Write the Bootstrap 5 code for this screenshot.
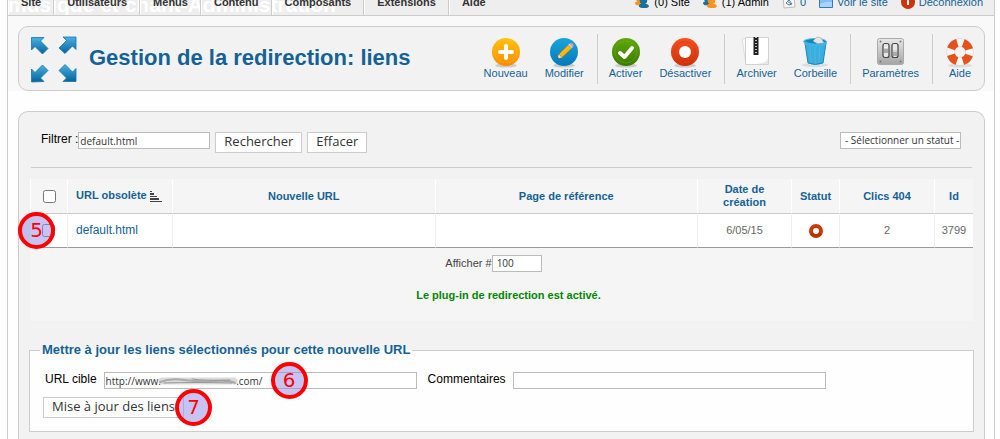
<!DOCTYPE html>
<html lang="fr">
<head>
<meta charset="utf-8">
<meta name="viewport" content="width=device-width, initial-scale=1">
<title>Gestion de la redirection: liens</title>
<link href="https://cdn.jsdelivr.net/npm/bootstrap@5.3.0/dist/css/bootstrap.min.css" rel="stylesheet">
<style>
  body { font-family: "Liberation Sans", Arial, sans-serif; font-size: 11px; line-height: 13px; color: #444; background: #fefefe; }
  a { color: #146295; text-decoration: none; }
  .frame { margin: 0 5px 0 7px; border: solid #ccc; border-width: 0 1px; }

  .topbar { height: 16px; background: #eee; border-bottom: 1px solid #ccc; line-height: 12px; }
  .site-name { left: 0; bottom: 0; font-size: 21px; line-height: 20px; color: #fff; white-space: nowrap; }
  .menu-item { padding: 0 12px 7px; border: solid; border-width: 0 1px; border-color: #ccc #ccc #ccc #fff; color: #333; font-weight: bold; }
  .menu-item:last-child { border-right: 0; }
  .status-list { gap: 13px; padding-right: 11px; }
  .status-item { gap: 4px; padding-bottom: 7px; color: #000; white-space: nowrap; }
  .status-item svg { margin-bottom: -1px; }
  a.status-item { color: #146295; }

  .header-zone { background: #f9f9f9; padding: 10px 9px 0 10px; }
  .panel { background: #f2f2f2; border: 1px solid #ccc; border-radius: 10px; }
  .header-zone .panel { padding: 5px 0 4px; }
  .page-heading { font-size: 22px; line-height: 26px; font-weight: bold; color: #146295; margin: 0; padding: 0 0 2px 8px; }
  .arrows { margin: 0 0 0 8px; }
  .tool { min-width: 32px; padding: 2px 0 5px; margin: 0 8px 0 9px; line-height: 12px; }
  .tool svg { margin-bottom: -1px; }
  .tool-sep { width: 1px; background: #ccc; margin: 0 2px 0 5px; }

  .main-panel { margin: 20px 9px 0 10px; border-bottom: 0; border-radius: 10px 10px 0 0; padding: 20px 11px 6px; }
  .filters { padding: 0 11px 14px 10px; margin: 0 1px; border-bottom: 1px solid #ccc; }
  .filters .push { margin-left: 5px; }
  .lbl { font-size: 12px; line-height: 15px; color: #000; }
  .field { font-family: "Open Sans", "Noto Sans", sans-serif; font-size: 10px; line-height: 13px; height: 17px; padding: 1px; border: 1px solid #bbb; border-radius: 0; background: #fff; color: #333; appearance: none; }
  .push { font-family: "Open Sans", "Noto Sans", sans-serif; font-size: 13px; line-height: 17px; height: 21px; padding: 0 8px 2px; border: 1px solid #ccc; background: #fff; color: #333; }
  .w-filter { width: 132px; }
  .w-status { width: 121px; padding: 1px 0 1px 4px; }
  .w-limit { width: 50px; padding: 1px 4px; }
  .w-url { width: 313px; }

  .links { width: 100%; table-layout: fixed; margin: 11px 0 0; border-collapse: separate; border-spacing: 0; color: #666; text-align: center; background: #f5f5f5; }
  .links th { height: 35px; padding: 0 8px; color: #146295; border-left: 1px solid #fff; border-bottom: 1px solid #ccc; vertical-align: middle; }
  .links tbody td { height: 34px; padding: 0 8px; background: #fff; border-left: 1px solid #efefef; border-bottom: 1px solid #999; vertical-align: middle; }
  .links tbody td:first-child { border-left: 0; }
  .links input[type=checkbox] { width: 13px; height: 13px; margin: 0; vertical-align: middle; }
  .links .c-id { padding: 0; }
  .link-name { font-size: 12px; }
  .sort-mark { vertical-align: -4px; }
  .links tfoot td { height: 73px; padding: 7px 0 0; vertical-align: top; }
  .pager { color: #444; padding-right: 16px; }
  .plugin-ok { color: #080; font-weight: bold; margin: 17px 0 0; padding-left: 14px; }

  .update { margin: 22px -1px 0; border: 1px solid #ccc; background: #fefefe; padding: 15px 13px 13px; }
  .update legend { float: none; width: auto; margin: 0 0 0 -3px; padding: 0 2px; font-size: 13px; line-height: 14px; font-weight: bold; color: #146295; }
  .update-row { gap: 7px; padding-left: 2px; }
  .callout-dot { width: 37px; height: 37px; border: 4px solid #f00; border-radius: 50%; background: rgba(143,136,232,.5); color: #f00; font: 20px/29px "DejaVu Sans", sans-serif; text-align: center; z-index: 2; }
  .dot-row { left: -12px; top: -2px; }
  .dot-url { left: 167px; top: -10px; }
  .dot-push { left: 132px; top: -8px; }
  .smudge { left: 54px; top: 4px; }
</style>
</head>
<body>
<svg class="position-absolute" width="0" height="0" aria-hidden="true">
  <defs>
    <linearGradient id="gBlue" x2="0" y2="1"><stop stop-color="#49b0e6"/><stop offset="1" stop-color="#04649b"/></linearGradient>
    <linearGradient id="gOrange" x2="0" y2="1"><stop stop-color="#ffc20e"/><stop offset="1" stop-color="#ff8a00"/></linearGradient>
    <linearGradient id="gSky" x2="0" y2="1"><stop stop-color="#18a5df"/><stop offset="1" stop-color="#0678b8"/></linearGradient>
    <linearGradient id="gGreen" x2="0" y2="1"><stop stop-color="#5fa80a"/><stop offset="1" stop-color="#3b7a00"/></linearGradient>
    <linearGradient id="gRed" x2="0" y2="1"><stop stop-color="#f8501f"/><stop offset="1" stop-color="#cf2f0a"/></linearGradient>
    <linearGradient id="gSteel" x2="0" y2="1"><stop stop-color="#e9e9e9"/><stop offset="1" stop-color="#a4a4a4"/></linearGradient>
    <symbol id="people" viewBox="0 0 16 16"><circle cx="5" cy="5" r="4" fill="#f7931e"/><path d="M0 9q5-3 10 0v3H3Q0 12 0 9z" fill="#f7931e"/><circle cx="9" cy="7" r="4" fill="#17739c"/><path d="M4 13q0-3 5-3t6 3q-1 2-5 2-5 0-6-2z" fill="#17739c"/></symbol>
    <symbol id="people2" viewBox="0 0 16 16"><circle cx="5" cy="5" r="4" fill="#17739c"/><path d="M0 9q5-3 10 0v3H3Q0 12 0 9z" fill="#17739c"/><circle cx="9" cy="7" r="4" fill="#f7931e"/><path d="M4 13q0-3 5-3t6 3q-1 2-5 2-5 0-6-2z" fill="#f7931e"/></symbol>
  </defs>
</svg>

<div class="frame d-flex flex-column min-vh-100">
  <header class="topbar d-flex align-items-end justify-content-between position-relative overflow-hidden">
    <div class="site-name position-absolute fw-bold">musique et chant-Administration</div>
    <nav class="d-flex position-relative">
      <a class="menu-item" href="#">Site</a><a class="menu-item" href="#">Utilisateurs</a><a class="menu-item" href="#">Menus</a><a class="menu-item" href="#">Contenu</a><a class="menu-item" href="#">Composants</a><a class="menu-item" href="#">Extensions</a><a class="menu-item" href="#">Aide</a>
    </nav>
    <div class="status-list d-flex align-items-end position-relative">
      <span class="status-item d-flex align-items-end"><svg width="15" height="15"><use href="#people"/></svg>(0) Site</span>
      <span class="status-item d-flex align-items-end"><svg width="15" height="15"><use href="#people2"/></svg>(1) Admin</span>
      <a class="status-item d-flex align-items-end" href="#"><svg width="14" height="14"><path d="M1 1h11l1 11-11 1z" fill="#f8f8f8" stroke="#bbb"/><path d="M4 8l3-3 3 4-3 1zM5 6l4 3" fill="none" stroke="#527d9b"/></svg>0</a>
      <a class="status-item d-flex align-items-end" href="#"><svg width="14" height="14"><path d="M.5 1.500h13v11H.5z" fill="#83bdfa" stroke="#3775bd"/><path d="M1 9q6-3 12-2v5H1z" fill="#a9d4ff"/></svg>Voir le site</a>
      <a class="status-item d-flex align-items-end" href="#"><svg width="14" height="14"><circle cx="7" cy="7" r="7" fill="#d0320c"/><path d="M7 4v6" stroke="#fff" stroke-width="2"/></svg>Déconnexion</a>
    </div>
  </header>

  <div class="header-zone">
    <div class="panel d-flex align-items-center">
      <svg class="arrows" width="54" height="54" viewBox="0 0 54 54" fill="url(#gBlue)" stroke="#1673a8" stroke-width=".8">
        <path d="M4.500 5.500H17l-3.500 3.500 7.500 7.500-5.500 5.500L8 14.500 4.500 18z"/>
        <path d="M49 5H36l3.500 3.500L32 16l6 5.500 7.500-7.500L49 17.500z"/>
        <path d="M4.500 50V37L8 40.500l7.500-7.500 5.500 5.500-7.500 7.500L17 49.500z"/>
        <path d="M49 49.500H36l3.500-3.500-7.500-7.500 6-6 7.500 7.500L49 36.500z"/>
      </svg>
      <h1 class="page-heading me-auto">Gestion de la redirection: liens</h1>
      <div class="d-flex text-center">
        <a class="tool d-flex flex-column align-items-center" href="#"><svg width="32" height="32"><ellipse cx="16" cy="29.500" rx="11" ry="2" fill="#ccc"/><circle cx="16" cy="16" r="14" fill="url(#gOrange)"/><circle cx="16" cy="16" r="11" fill="none" stroke="#ffb52e" opacity=".5"/><path d="M16 10v12M10 16h12" stroke="#fff" stroke-width="4" stroke-linecap="round"/></svg>Nouveau</a>
        <a class="tool d-flex flex-column align-items-center" href="#"><svg width="32" height="32"><ellipse cx="16" cy="29.500" rx="11" ry="2" fill="#ccc"/><circle cx="16" cy="16" r="14" fill="url(#gSky)"/><path d="M9 23l2-5 4 3z" fill="#f7dfb6"/><path d="M11 18l9-9 3.500 3.500L14 21.500z" fill="#f9b80d" stroke="#ad7108" stroke-width=".6"/><path d="M20 9l1.500-1.500L25 11l-1.500 1.500z" fill="#ccc"/><path d="M21.500 7.500q2-1 3.500.5t0 3z" fill="#ef9b9b"/><path d="M9 23l.8-2 1.200 1.200z" fill="#222"/></svg>Modifier</a>
        <span class="tool-sep"></span>
        <a class="tool d-flex flex-column align-items-center" href="#"><svg width="32" height="32"><ellipse cx="16" cy="29.500" rx="11" ry="2" fill="#ccc"/><circle cx="16" cy="16" r="14" fill="url(#gGreen)"/><circle cx="16" cy="16" r="11" fill="none" stroke="#74b52b" opacity=".4"/><path d="M10 17l4.500 4L22 12" fill="none" stroke="#fff" stroke-width="4" stroke-linecap="round" stroke-linejoin="round"/></svg>Activer</a>
        <a class="tool d-flex flex-column align-items-center" href="#"><svg width="32" height="32"><ellipse cx="16" cy="29.500" rx="11" ry="2" fill="#ccc"/><circle cx="16" cy="16" r="14" fill="url(#gRed)"/><circle cx="16" cy="16" r="10.500" fill="none" stroke="#d33a12" opacity=".6"/><circle cx="16" cy="16" r="6" fill="#fff"/></svg>Désactiver</a>
        <span class="tool-sep"></span>
        <a class="tool d-flex flex-column align-items-center" href="#"><svg width="32" height="32"><path d="M1 3l6-1v26H5z" fill="#fafafa" stroke="#ddd"/><path d="M4.500 1.500h23v27h-23z" fill="#fff" stroke="#d2d2d2"/><path d="M16 28q10-1 11-6v6z" fill="#e8e8e8"/><path d="M15 1v18" stroke="#222" stroke-width="5"/><path d="M15 1v18" stroke="#bbb" stroke-width="2" stroke-dasharray="1 2"/></svg>Archiver</a>
        <a class="tool d-flex flex-column align-items-center" href="#"><svg width="32" height="32"><ellipse cx="16" cy="29" rx="13" ry="2" fill="#ddd"/><path d="M6 7l3 20q7 3 15 0l3-20z" fill="#3badde" stroke="#1888bd"/><path d="M11 10l1 16M16 10v17M21 10l-1 16" stroke="#5bc3ec" opacity=".5"/><ellipse cx="16" cy="5.500" rx="11.500" ry="3" fill="#1785b8" stroke="#51bfe9"/><path d="M14 5l4-4 4 1 3 5-6 1z" fill="#e4e4e4" stroke="#aaa" stroke-width=".7"/><path d="M5 5q10 5 23 1l-1 3q-10 3-21 0z" fill="#3fb4e4"/></svg>Corbeille</a>
        <span class="tool-sep"></span>
        <a class="tool d-flex flex-column align-items-center" href="#"><svg width="32" height="32"><rect x="2.500" y="2.500" width="26" height="26" rx="2" fill="url(#gSteel)" stroke="#aaa"/><g fill="#777"><circle cx="5.500" cy="5.500" r="1"/><circle cx="25.500" cy="5.500" r="1"/><circle cx="5.500" cy="25.500" r="1"/><circle cx="25.500" cy="25.500" r="1"/></g><g fill="#e8e8e8" stroke="#444" stroke-width="1.200"><rect x="8" y="7.500" width="6" height="14" rx="2"/><rect x="17" y="7.500" width="6" height="14" rx="2"/></g><path d="M9 12h4v5H9zM18 14h4v6h-4z" fill="#aaa"/><path d="M9 12h4M18 15h4" stroke="#fff"/></svg>Paramètres</a>
        <span class="tool-sep"></span>
        <a class="tool d-flex flex-column align-items-center" href="#"><svg width="32" height="32"><ellipse cx="16" cy="29.500" rx="12" ry="2" fill="#ddd"/><circle cx="16" cy="16" r="9.500" fill="none" stroke="#ccc" stroke-width="8"/><circle cx="16" cy="16" r="9.500" fill="none" stroke="#f8f8f8" stroke-width="7"/><circle cx="16" cy="16" r="9.500" fill="none" stroke="#e5521b" stroke-width="8" stroke-dasharray="8.900 6.022" stroke-dashoffset="-3"/></svg>Aide</a>
      </div>
    </div>
  </div>

  <main class="panel main-panel flex-grow-1">
    <form>
      <div class="filters d-flex align-items-start">
        <label class="lbl" for="filter">Filtrer :</label>
        <input class="field w-filter" id="filter" type="text" value="default.html">
        <button class="push" type="button">Rechercher</button>
        <button class="push" type="button">Effacer</button>
        <select class="field w-status ms-auto me-0" aria-label="Statut"><option>- Sélectionner un statut -</option></select>
      </div>

      <table class="links">
        <colgroup><col style="width:37px"><col style="width:105px"><col><col><col style="width:94px"><col style="width:48px"><col style="width:95px"><col style="width:39px"></colgroup>
        <thead>
          <tr>
            <th class="p-0"><input type="checkbox" aria-label="Tout cocher"></th>
            <th class="text-start text-nowrap">URL obsolète <svg class="sort-mark" width="12" height="12" fill="#444"><path d="M0 0h2v1H0zM0 2h4v2H0zM0 5h7v1H0zM0 7h9v2H0zM0 10h12v1H0z"/></svg></th>
            <th>Nouvelle URL</th><th>Page de référence</th><th>Date de création</th><th class="px-0">Statut</th><th>Clics 404</th><th class="c-id">Id</th>
          </tr>
        </thead>
        <tbody>
          <tr>
            <td class="p-0"><div class="position-relative d-flex align-items-center justify-content-center h-100"><input type="checkbox" aria-label="Cocher default.html"><span class="callout-dot dot-row position-absolute">5</span></div></td>
            <td class="text-start"><a class="link-name" href="#">default.html</a></td>
            <td></td><td></td><td>6/05/15</td>
            <td><svg width="14" height="14"><circle cx="7" cy="7" r="5" fill="#fff" stroke="#c83a08" stroke-width="4"/><path d="M2.500 9a5 5 0 0 0 9 0" fill="none" stroke="#9c2b02" stroke-width="3" opacity=".5"/></svg></td>
            <td>2</td><td class="c-id">3799</td>
          </tr>
        </tbody>
        <tfoot>
          <tr><td colspan="8">
            <div class="pager d-flex align-items-center justify-content-center"><label for="limit">Afficher #</label><select class="field w-limit" id="limit"><option>100</option></select></div>
            <p class="plugin-ok">Le plug-in de redirection est activé.</p>
          </td></tr>
        </tfoot>
      </table>

      <fieldset class="update">
        <legend>Mettre à jour les liens sélectionnés pour cette nouvelle URL</legend>
        <div class="update-row d-flex align-items-start mb-2">
          <label class="lbl" for="target">URL cible</label>
          <div class="position-relative">
            <input class="field w-url d-block" id="target" type="text" value="http://www.&nbsp;&nbsp;&nbsp;&nbsp;&nbsp;&nbsp;&nbsp;&nbsp;&nbsp;&nbsp;&nbsp;&nbsp;&nbsp;&nbsp;&nbsp;&nbsp;&nbsp;&nbsp;&nbsp;&nbsp;&nbsp;&nbsp;&nbsp;&nbsp;&nbsp;&nbsp;&nbsp;&nbsp;&nbsp;.com/">
            <svg class="smudge position-absolute" width="80" height="10" fill="none" stroke-linecap="round"><path d="M4 5h72" stroke="#ccc" stroke-width="7" opacity=".7"/><path d="M2 6q10-4 24-2t30 1 21 2" stroke="#aaa" stroke-width="2"/><path d="M34 3q14 2 38 1M6 7q30-1 68 0" stroke="#999"/></svg>
            <span class="callout-dot dot-url position-absolute">6</span>
          </div>
          <label class="lbl ps-1" for="comment">Commentaires</label>
          <input class="field w-url" id="comment" type="text">
        </div>
        <div class="position-relative d-inline-block"><button class="push d-block" type="button">Mise à jour des liens</button><span class="callout-dot dot-push position-absolute">7</span></div>
      </fieldset>
    </form>
  </main>
</div>
<script src="https://cdn.jsdelivr.net/npm/bootstrap@5.3.0/dist/js/bootstrap.bundle.min.js"></script>
</body>
</html>
